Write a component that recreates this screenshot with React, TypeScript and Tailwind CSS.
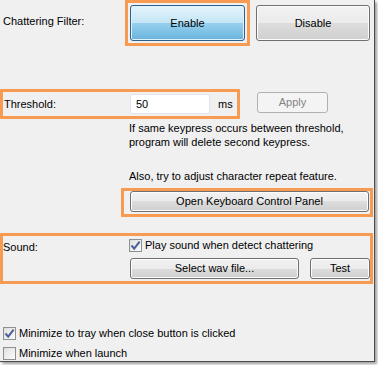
import React from "react";

const btn =
  "flex items-center justify-center rounded-[3px] border border-[#707070] bg-[linear-gradient(#f2f2f2_0%,#ebebeb_50%,#dddddd_50%,#cfcfcf_100%)] shadow-[inset_0_0_0_1px_#fcfcfc] text-black";

function CheckBox({ checked }: { checked?: boolean }) {
  return (
    <span className="flex h-[13px] w-[13px] shrink-0 items-center justify-center border border-[#8e8f8f] bg-[linear-gradient(135deg,#dcdcdc,#fbfbfb)]">
      <span className="flex h-[9px] w-[9px] items-center justify-center bg-[linear-gradient(135deg,#e4e4e4,#f7f7f7)]">
        {checked && (
          <svg width="11" height="11" viewBox="0 0 11 11" className="-m-[1px]">
            <path d="M1.5 5.5 L4.2 8.6 L9.6 1.6" fill="none" stroke="#4a5f97" strokeWidth="2" />
          </svg>
        )}
      </span>
    </span>
  );
}

export default function App() {
  return (
    <div className="h-[365px] w-[378px] bg-white font-['Liberation_Sans',Arial,sans-serif] text-[11px] text-black">
      <div className="h-[362px] w-[375px] border-r border-b border-[#4c4c4c] bg-[#f0f0f0] shadow-[2px_2px_3px_rgba(0,0,0,0.4)]">
        {/* chattering filter */}
        <div className="flex h-[46px] items-start">
          <div className="w-[125px] pt-[13px] pl-[3px]">Chattering Filter:</div>
          <div className="border-[3px] border-[#f79a52] p-[2px]">
            <button className="flex h-[36px] w-[115px] items-center justify-center rounded-[3px] border border-[#2c628b] bg-[linear-gradient(#e5f4fc_0%,#c4e5f6_50%,#98d1ef_50%,#68b3db_100%)] shadow-[inset_0_0_0_1px_#dff1fb]">
              Enable
            </button>
          </div>
          <button className={`${btn} mt-[5px] ml-[6px] h-[36px] w-[114px]`}>Disable</button>
        </div>

        {/* threshold */}
        <div className="mt-[43px] flex items-start">
          <div className="flex h-[30px] w-[240px] items-center border-[3px] border-[#f79a52]">
            <div className="w-[127px] pl-[1px]">Threshold:</div>
            <div className="flex h-[20px] w-[80px] items-center rounded-[2px] border border-[#e2e3ea] bg-white pl-[5px]">50</div>
            <div className="ml-[8px]">ms</div>
          </div>
          <button className="mt-[3px] ml-[17px] flex h-[21px] w-[71px] items-center justify-center rounded-[3px] border border-[#adb2b5] bg-[#f4f4f4] text-[#838383]">
            Apply
          </button>
        </div>

        <div className="mt-[2px] pl-[129px] leading-[14px]">
          <div>If same keypress occurs between threshold,</div>
          <div>program will delete second keypress.</div>
          <div className="mt-[20px]">Also, try to adjust character repeat feature.</div>
        </div>

        {/* keyboard panel */}
        <div className="mt-[5px] ml-[121px] h-[29px] w-[252px] border-[3px] border-[#f79a52] pl-[6px]">
          <button className={`${btn} h-[21px] w-[239px]`}>Open Keyboard Control Panel</button>
        </div>

        {/* sound */}
        <div className="mt-[16px] flex h-[51px] w-[373px] border-[3px] border-[#f79a52]">
          <div className="w-[126px] pt-[3px]">Sound:</div>
          <div className="pt-[3px]">
            <div className="flex h-[13px] items-center gap-[3px]">
              <CheckBox checked />
              <span>Play sound when detect chattering</span>
            </div>
            <div className="mt-[6px] ml-[1px] flex gap-[11px]">
              <button className={`${btn} h-[21px] w-[169px]`}>Select wav file...</button>
              <button className={`${btn} h-[21px] w-[60px]`}>Test</button>
            </div>
          </div>
        </div>

        {/* minimize options */}
        <div className="mt-[42px] flex h-[15px] items-center gap-[3px] pl-[3px]">
          <CheckBox checked />
          <span>Minimize to tray when close button is clicked</span>
        </div>
        <div className="mt-[5px] flex h-[15px] items-center gap-[3px] pl-[3px]">
          <CheckBox />
          <span>Minimize when launch</span>
        </div>
      </div>
    </div>
  );
}
